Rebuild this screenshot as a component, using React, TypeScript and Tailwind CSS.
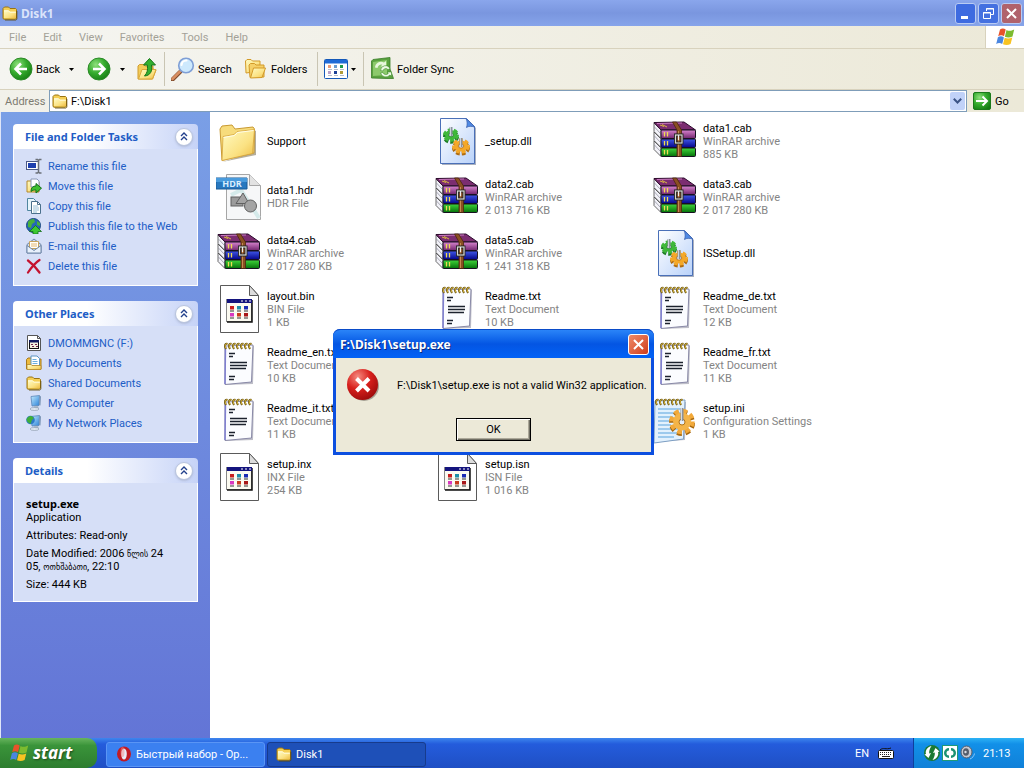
import type { ReactNode } from 'react'

type FileKind = 'folder' | 'dll' | 'cab' | 'hdr' | 'bin' | 'txt' | 'ini'

interface FileEntry {
  name: string
  kind: FileKind
  type?: string
  size?: string
}

// null keeps a slot of the grid empty
const files: (FileEntry | null)[] = [
  { name: 'Support', kind: 'folder' },
  { name: '_setup.dll', kind: 'dll' },
  { name: 'data1.cab', kind: 'cab', type: 'WinRAR archive', size: '885 KB' },
  { name: 'data1.hdr', kind: 'hdr', type: 'HDR File' },
  { name: 'data2.cab', kind: 'cab', type: 'WinRAR archive', size: '2 013 716 KB' },
  { name: 'data3.cab', kind: 'cab', type: 'WinRAR archive', size: '2 017 280 KB' },
  { name: 'data4.cab', kind: 'cab', type: 'WinRAR archive', size: '2 017 280 KB' },
  { name: 'data5.cab', kind: 'cab', type: 'WinRAR archive', size: '1 241 318 KB' },
  { name: 'ISSetup.dll', kind: 'dll' },
  { name: 'layout.bin', kind: 'bin', type: 'BIN File', size: '1 KB' },
  { name: 'Readme.txt', kind: 'txt', type: 'Text Document', size: '10 KB' },
  { name: 'Readme_de.txt', kind: 'txt', type: 'Text Document', size: '12 KB' },
  { name: 'Readme_en.txt', kind: 'txt', type: 'Text Document', size: '10 KB' },
  null,
  { name: 'Readme_fr.txt', kind: 'txt', type: 'Text Document', size: '11 KB' },
  { name: 'Readme_it.txt', kind: 'txt', type: 'Text Document', size: '11 KB' },
  null,
  { name: 'setup.ini', kind: 'ini', type: 'Configuration Settings', size: '1 KB' },
  { name: 'setup.inx', kind: 'bin', type: 'INX File', size: '254 KB' },
  { name: 'setup.isn', kind: 'bin', type: 'ISN File', size: '1 016 KB' },
]

const menus = ['File', 'Edit', 'View', 'Favorites', 'Tools', 'Help']

/* ---------- shared gradients ---------- */

function Gradients() {
  return (
    <svg className="absolute size-0" aria-hidden="true">
      <defs>
        <linearGradient id="folder" x1="0" y1="0" x2="1" y2="1">
          <stop offset="0" stopColor="#fffbc4" />
          <stop offset="0.6" stopColor="#fbe283" />
          <stop offset="1" stopColor="#eebd45" />
        </linearGradient>
        <radialGradient id="green" cx="0.35" cy="0.3" r="0.8">
          <stop offset="0" stopColor="#8fe07c" />
          <stop offset="0.5" stopColor="#35ab2d" />
          <stop offset="1" stopColor="#137a12" />
        </radialGradient>
        <radialGradient id="red" cx="0.35" cy="0.25" r="0.8">
          <stop offset="0" stopColor="#f58b80" />
          <stop offset="0.5" stopColor="#d8201c" />
          <stop offset="1" stopColor="#9c0b0b" />
        </radialGradient>
        <linearGradient id="page" x1="0" y1="0" x2="1" y2="1">
          <stop offset="0" stopColor="#ffffff" />
          <stop offset="1" stopColor="#b9d2fa" />
        </linearGradient>
        <linearGradient id="purpleBook" x1="0" y1="0" x2="0" y2="1">
          <stop offset="0" stopColor="#d884cf" />
          <stop offset="1" stopColor="#70246c" />
        </linearGradient>
        <linearGradient id="blueBook" x1="0" y1="0" x2="0" y2="1">
          <stop offset="0" stopColor="#4058e8" />
          <stop offset="1" stopColor="#05058a" />
        </linearGradient>
        <linearGradient id="greenBook" x1="0" y1="0" x2="0" y2="1">
          <stop offset="0" stopColor="#3fd63a" />
          <stop offset="1" stopColor="#05700a" />
        </linearGradient>
        <linearGradient id="screen" x1="0" y1="0" x2="1" y2="1">
          <stop offset="0" stopColor="#c4ecff" />
          <stop offset="1" stopColor="#2a82d8" />
        </linearGradient>
      </defs>
    </svg>
  )
}

/* ---------- small icons ---------- */

function SmallFolder() {
  return (
    <svg className="size-4 shrink-0" viewBox="0 0 16 16">
      <path d="M1 13.5V3.5L2.5 2h4L8 3.5h5.5l1 1V13l-1 1.2H2z" fill="#f5cf55" stroke="#9a7412" />
      <path d="M2 5.5h4.5L8 6.8h6V13H2z" fill="url(#folder)" />
      <path d="M2 5.8h4.3L8 7.2h5.8" stroke="#fffde0" fill="none" />
      <path d="M14.9 6v8.2l-1 .9H3" stroke="#5d4708" fill="none" strokeOpacity="0.7" />
    </svg>
  )
}

function WindowsFlag({ className }: { className: string }) {
  return (
    <svg className={className} viewBox="0 0 20 20">
      <path d="M5 2.500C7 1 9 1.300 10.700 2.600L9 9.300C7.200 8 5.200 8 3.200 9.300z" fill="#e8532a" />
      <path d="M11.500 3c2.200 1.200 4.500 1.200 7.700-.4l-1.700 6.800c-2.500 1.300-5 1.400-7.600.3z" fill="#7cbb2f" />
      <path d="M2.900 10.300c2-1.400 4.200-1.200 6 .1L7.200 17C5.300 15.700 3.200 15.700 1.200 17z" fill="#4a86e0" />
      <path d="M9.700 10.700c2.500 1.200 4.900 1.100 7.600-.3l-1.700 6.600c-2.600 1.300-5.200 1.300-7.600.2z" fill="#f8c322" />
    </svg>
  )
}

function RoundArrow({ flip }: { flip?: boolean }) {
  return (
    <svg className="size-6" viewBox="0 0 24 24">
      <circle cx="12" cy="12" r="11" fill="url(#green)" stroke="#2c8a28" />
      <path
        d={flip ? 'M6 12h11.500M12 6.500l5.500 5.500-5.500 5.500' : 'M18 12H6.500M12 6.500L6.500 12l5.500 5.500'}
        stroke="#fff"
        strokeWidth="2.500"
        fill="none"
      />
    </svg>
  )
}

function UpFolder() {
  return (
    <svg className="h-6 w-5" viewBox="0 0 20 24">
      <path d="M1 22V9l1.500-1.500h4L8 9h8v3l3 1-3.500 9z" fill="#f3cc5a" stroke="#d09a2b" />
      <path d="M1.500 22L5 12.500h14L15.500 22z" fill="url(#folder)" stroke="#dba93b" />
      <path d="M7.500 19C13.500 18.500 15.500 14 14.500 8H18.500L12.500 1.500 6.500 8h3.800c.7 5 0 8-2.800 11z" fill="#34b02f" stroke="#17741a" />
    </svg>
  )
}

function Magnifier() {
  return (
    <svg className="size-6" viewBox="0 0 24 24">
      <path d="M1.500 22.500L9 15" stroke="#7f4a2b" strokeWidth="4" strokeLinecap="round" />
      <path d="M1.500 22L9 14.500" stroke="#d98f62" strokeWidth="2.500" strokeLinecap="round" />
      <circle cx="15" cy="8.500" r="7.300" fill="#cde9fd" stroke="#7f9fd6" strokeWidth="1.600" />
      <path d="M10.500 8a4.800 4.800 0 0 1 5-4.500" stroke="#fff" strokeWidth="2.200" fill="none" strokeLinecap="round" />
    </svg>
  )
}

function FoldersIcon() {
  return (
    <svg className="size-6" viewBox="0 0 24 24">
      <path d="M2 16L1.500 4 3 2.500h4L8.500 4h7.500v10z" fill="url(#folder)" stroke="#d39a28" />
      <path d="M6 20.500L5 8l1.500-1.500h4L12 8h8v12z" fill="#f5d068" stroke="#d39a28" />
      <path d="M6.500 21l3-10h12l-3.500 9.500z" fill="url(#folder)" stroke="#d39a28" />
    </svg>
  )
}

function ViewsIcon() {
  const dots = ['#e89a78', '#6a9bd0', '#1f9a4a', '#b9a0c8', '#1b3f96', '#b09b38']
  return (
    <svg className="h-5 w-6" viewBox="0 0 24 20">
      <rect x="0.500" y="0.500" width="23" height="19" rx="1" fill="#fff" stroke="#1458b8" />
      <rect x="1" y="1" width="22" height="3.500" fill="#1e6ad6" />
      {dots.map((c, i) => (
        <g key={c}>
          <rect x={4 + (i % 3) * 6} y={i < 3 ? 6 : 12} width="3" height="3" fill={c} />
          <rect x={4 + (i % 3) * 6} y={i < 3 ? 10 : 16} width="4" height="1" fill="#b5bccb" />
        </g>
      ))}
    </svg>
  )
}

function SyncIcon() {
  return (
    <svg className="size-6" viewBox="0 0 24 24">
      <path d="M3 2.500L20 .500V12l3.500 9.500H17L1.500 21V4z" fill="#5aa23f" stroke="#3a7d2a" strokeWidth="0.800" />
      <path d="M3 5L17 3v15L3 19z" fill="#8cc96c" />
      <path d="M5 10.500A6 6 0 0 1 14 5.500l2-1.500v5.500h-5.500l1.800-1.800A3.800 3.800 0 0 0 7.500 11z" fill="#e8f7dd" />
      <path d="M10.500 13.500a5 5 0 0 1 9.500-2l-2 1.200a2.800 2.800 0 0 0-5 1.300zM10.500 16a5.500 5.500 0 0 0 9.500 2l1.500 1.500V15h-4.500l1.300 1.300a3 3 0 0 1-5.300-.8z" fill="#eef9e6" stroke="#3f8d2c" strokeWidth="0.600" />
    </svg>
  )
}

function RenameIcon() {
  return (
    <svg className="size-4" viewBox="0 0 16 16">
      <rect x="0.500" y="3.500" width="12" height="8" fill="#fff" stroke="#4c5a86" />
      <rect x="2" y="5" width="8" height="5" fill="#1d3fae" />
      <path d="M9.500 1.500h2l1 1 1-1h2M12.500 2.500v11M9.500 15h2l1-1 1 1h2" fill="none" stroke="#6b7078" strokeWidth="1.500" />
    </svg>
  )
}

function MoveIcon() {
  return (
    <svg className="size-4" viewBox="0 0 16 16">
      <path d="M1 14V3h5l1 1h6v10z" fill="url(#folder)" stroke="#b4892a" />
      <path d="M5 1h6l2 2v6H5z" fill="#fff" stroke="#8a98b8" />
      <path d="M5 13.500c0-4 2-5.500 5-5.500V5.500l5.500 4.700L10 15v-3c-2 0-3.500.2-5 1.500z" fill="#3fbf2f" stroke="#14701a" />
    </svg>
  )
}

function CopyIcon() {
  return (
    <svg className="size-4" viewBox="0 0 16 16">
      <path d="M1.500.5h6l2 2v10h-8z" fill="#e6f4fb" stroke="#4f86a0" />
      <path d="M5.500 3.500h6l3 3v9h-9z" fill="#fff" stroke="#4b708c" />
      <path d="M7 8h5M7 10h6M7 12h6M7 14h4" stroke="#7fb0cc" strokeWidth="0.800" />
      <path d="M11.500 3.500v3h3" fill="none" stroke="#4b708c" />
    </svg>
  )
}

function WebIcon() {
  return (
    <svg className="size-4" viewBox="0 0 16 16">
      <circle cx="7.500" cy="7.500" r="7" fill="#2467b8" stroke="#1d4a80" />
      <path d="M2 4c2-3 5-3 6-3l1 3-3 2-1 4-3-1z" fill="#49b23a" />
      <path d="M11 3l3 2v3l-3-1z" fill="#49b23a" />
      <path d="M9.500 7.500l6 6h-3.500V16H7v-2.500H3.500z" fill="#3dc82f" stroke="#14701a" strokeWidth="0.800" />
    </svg>
  )
}

function MailIcon() {
  return (
    <svg className="size-4" viewBox="0 0 16 16">
      <path d="M1 6.500l7-5.500 7 5.500V15H1z" fill="#cfdcf0" stroke="#6e86a8" />
      <path d="M3.500 3.500h9v7h-9z" fill="#fff" stroke="#c8a25c" />
      <path d="M5 6h6M5 8h6" stroke="#e6b870" />
      <path d="M1 15V7.500l7 5 7-5V15z" fill="#e8f1fc" stroke="#6e86a8" />
    </svg>
  )
}

function DeleteIcon() {
  return (
    <svg className="size-4" viewBox="0 0 16 16">
      <path d="M2 2.500c4 3 8 7 11.500 12M13.500 2C9 5 5 10 2 14.500" stroke="#c4122f" strokeWidth="2.200" fill="none" strokeLinecap="round" />
    </svg>
  )
}

function DriveIcon() {
  return (
    <svg className="size-4" viewBox="0 0 16 16">
      <path d="M1.500.5h10l3 3v12h-13z" fill="#fff" stroke="#555" />
      <path d="M11.500.5v3h3" fill="none" stroke="#555" />
      <rect x="3.500" y="5.500" width="9" height="8" fill="#f4f0e0" stroke="#111" />
      <rect x="3" y="5" width="10" height="2.500" fill="#111a60" />
      <path d="M5 9h2v1H5zM9 9h2v1H9zM6 11h2v1H6zM10 11h2v1h-2z" fill="#702850" />
    </svg>
  )
}

function DocumentsIcon() {
  return (
    <svg className="size-4" viewBox="0 0 16 16">
      <path d="M.5 14V4.500L2 3h3l1 1h9v10z" fill="#edbb3f" stroke="#a87a1b" />
      <path d="M5 1h6l2.500 2.500V11H5z" fill="#fff" stroke="#5d95c4" />
      <path d="M6.500 4.500h4M6.500 6.500h5M6.500 8.500h5" stroke="#6aaee0" />
      <path d="M1 14.500V9.500h4l1 1h9v4z" fill="url(#folder)" stroke="#b4892a" strokeWidth="0.800" />
    </svg>
  )
}

function ComputerIcon({ globe }: { globe?: boolean }) {
  return (
    <svg className="size-4" viewBox="0 0 16 16">
      <path d="M5 1.500L13.500.5l-.5 10-7 .5z" fill="url(#screen)" stroke="#5a86b8" strokeWidth="0.800" />
      <path d="M13.500.5l1.500 1-.5 9-1.500-.5z" fill="#7d97b8" />
      <path d="M8 11h4l1 2.500-5 1z" fill="#a9b9cc" />
      <ellipse cx="8.500" cy="14" rx="4.500" ry="1.500" fill="#dfe7f0" stroke="#8494a8" strokeWidth="0.600" />
      {globe && (
        <>
          <circle cx="4.500" cy="5" r="4.300" fill="#2d78c8" />
          <path d="M.5 4.500c1-2.500 3-4 5-3.500L8 3 6 5 4.500 9 1.500 7z" fill="#3fae3a" />
        </>
      )}
    </svg>
  )
}

/* ---------- 48px file icons ---------- */

function BigFolder() {
  return (
    <svg className="size-12" viewBox="0 0 48 48">
      <path d="M6 45L40 38V14l-2-1v22z" fill="#6a5c38" opacity="0.500" />
      <path d="M4 12l2-3 10-1 3 4 18-2 1.500 2L38 36 6 43.500z" fill="#f7dc7c" stroke="#c99a32" />
      <path d="M6 43.500L7 19.500l11-2 3-3 17.500-2-2 24z" fill="url(#folder)" stroke="#d6a53d" strokeWidth="0.800" />
      <path d="M7.500 20.500l11-2 3-3 16-2" stroke="#fffde8" fill="none" />
    </svg>
  )
}

interface GearProps {
  x: number
  y: number
  r: number
  fill: string
  stroke: string
}

function Gear({ x, y, r, fill, stroke }: GearProps) {
  return (
    <g>
      <ellipse cx={x} cy={y + 2} rx={r} ry={r * 0.8} fill="none" stroke={stroke} strokeWidth="4" strokeDasharray="3.500 2" />
      <ellipse cx={x} cy={y} rx={r} ry={r * 0.8} fill="none" stroke={fill} strokeWidth="4" strokeDasharray="3.500 2" />
      <ellipse cx={x} cy={y} rx={r} ry={r * 0.8} fill={fill} />
      <ellipse cx={x} cy={y} rx={r * 0.4} ry={r * 0.3} fill="#e8eefa" stroke={stroke} strokeWidth="0.800" />
      <path d={`M${x - 1.5} ${y - 8}h3v9h-3z`} fill="#8a929c" />
      <path d={`M${x - 0.5} ${y - 8}v9`} stroke="#cdd4dc" />
    </g>
  )
}

function DllIcon() {
  return (
    <svg className="size-12" viewBox="0 0 48 48">
      <path d="M8 3h26l8 8v37H8z" fill="#56627e" opacity="0.500" />
      <path d="M6.500 1.500h26l8 8v37h-34z" fill="url(#page)" stroke="#4a70b8" />
      <path d="M32 1.500l8.500 8.500c-3-1-6-1-8 .500 1-3 1-6-.500-9z" fill="#4f8ae6" stroke="#3a62b0" strokeWidth="0.800" />
      <Gear x={17} y={18} r={6} fill="#3fb83a" stroke="#1f7d28" />
      <Gear x={27} y={29} r={7} fill="#f4a828" stroke="#b06c10" />
    </svg>
  )
}

function CabIcon() {
  const books = [
    { y: 13, fill: 'url(#purpleBook)' },
    { y: 22, fill: 'url(#blueBook)' },
    { y: 31, fill: 'url(#greenBook)' },
  ]
  return (
    <svg className="size-12" viewBox="0 0 48 48">
      {books.map((b) => (
        <g key={b.y}>
          <path d={`M2 ${b.y - 7}l7 7v8.500l-7-7z`} fill="#f2f2f8" stroke="#444" strokeWidth="0.800" />
          <path d={`M2.500 ${b.y - 3}l6 6.500`} stroke="#8a8a9a" strokeWidth="0.700" />
        </g>
      ))}
      <path d="M2 5.500l30-.5 11.500 8H9z" fill="#7b2d70" stroke="#2c0a2c" />
      <path d="M5 6.500l25-.500" stroke="#c877be" />
      <path d="M8 8l4 1.500M10 7.500l5 2.500" stroke="#d8b840" />
      {books.map((b) => (
        <g key={b.y}>
          <rect x="9" y={b.y} width="34.500" height="8.500" rx="1" fill={b.fill} stroke="#161020" />
          <path d={`M12.500 ${b.y + 2}v4.500M15.500 ${b.y + 2}v4.500`} stroke="#f0dc50" strokeWidth="1.300" />
        </g>
      ))}
      <path d="M20.500 5h4l5 8v26.500h-4.500V13z" fill="#8a4f22" stroke="#4d270d" strokeWidth="0.800" />
      <path d="M26.500 14v25" stroke="#c48a52" />
      <rect x="23.500" y="18" width="6.500" height="8" fill="none" stroke="#222" strokeWidth="3" />
      <rect x="23.500" y="18" width="6.500" height="8" fill="none" stroke="#d8d8d0" strokeWidth="1.200" />
      <path d="M26.500 18v5" stroke="#eee" strokeWidth="1.200" />
    </svg>
  )
}

function HdrIcon() {
  return (
    <svg className="size-12" viewBox="0 0 48 48">
      <path d="M10.500 1.500h23l11 11v34h-34z" fill="#f6f7f8" stroke="#a6a6a6" />
      <path d="M33.500 1.500v11h11" fill="#e2e2e2" stroke="#a6a6a6" />
      <path d="M15 22l10-5 18 28" stroke="#d5eaea" strokeWidth="4" fill="none" />
      <rect x="15" y="24" width="12" height="9" fill="#9b9b9b" stroke="#606060" />
      <path d="M27 20l6 10.500H20z" fill="#a4a4a4" stroke="#606060" />
      <circle cx="34.500" cy="33" r="6" fill="#a4a4a4" stroke="#606060" />
      <path d="M0 5h31v11H0z" fill="#2878bf" stroke="#1a5a96" />
      <path d="M0 5h31v4H0z" fill="#4a9bdc" />
      <text x="16" y="14" textAnchor="middle" fontSize="9" fontWeight="700" fill="#d8efff" fontFamily="Open Sans, sans-serif">
        HDR
      </text>
    </svg>
  )
}

function BinIcon() {
  const dots = ['#c81e1e', '#1e8ea8', '#1c2cb4', '#d838c0', '#c83c1e', '#a81818']
  return (
    <svg className="size-12" viewBox="0 0 48 48">
      <path d="M4.500.5h29l9 10v37h-38z" fill="#fff" stroke="#5a5a5a" />
      <path d="M33.500.5v10h9z" fill="#dcdcdc" stroke="#5a5a5a" />
      <rect x="10.500" y="14.500" width="25" height="22" fill="#fbfaf0" stroke="#888" />
      <path d="M36 15v22H11" fill="none" stroke="#111" strokeWidth="1.500" />
      <rect x="11" y="14" width="25" height="4" fill="#14147e" />
      <path d="M25 16h2M29 16h2M33 16h2" stroke="#fff" />
      {dots.map((c, i) => (
        <g key={c}>
          <rect x={14 + (i % 3) * 7} y={i < 3 ? 21 : 28} width="4" height="3.500" fill={c} />
          <rect x={14 + (i % 3) * 7} y={i < 3 ? 25.500 : 32.500} width="4" height="1" fill="#333" />
        </g>
      ))}
    </svg>
  )
}

function Rings({ from }: { from: number }) {
  return (
    <>
      {[0, 4, 8, 12, 16, 20, 24].map((dx) => (
        <g key={dx} fill="none">
          <path d={`M${from + dx} 8c-2-3-1-6 1.500-5`} stroke="#6f5a18" strokeWidth="2" />
          <path d={`M${from + dx} 7.500c-1.500-3-.5-5.500 1.500-4.500`} stroke="#d8b53a" />
        </g>
      ))}
    </>
  )
}

function TxtIcon() {
  return (
    <svg className="size-12" viewBox="0 0 48 48">
      <path d="M11 6l27-1-1 38-28 1z" fill="#7e7e92" opacity="0.500" />
      <path d="M9 5l28-1-1.500 37L9 43.500z" fill="#fbfcff" stroke="#8a8aa8" />
      <path d="M9.500 5L9 43" stroke="#7f7fd0" strokeWidth="1.500" />
      <Rings from={10} />
      <path d="M13 12.500h6M13 15.500h4M14 21.500h17M14 24.500h17M14 27.500h16M13 35.500h6M13 38.500h5" stroke="#1c222e" strokeWidth="1.500" />
    </svg>
  )
}

function IniIcon() {
  return (
    <svg className="size-12" viewBox="0 0 48 48">
      <path d="M4 6l30-1-1 38-30 2z" fill="#7e7e92" opacity="0.500" />
      <path d="M3 4l30-1-1.500 39L2 46z" fill="#e2f1fd" stroke="#7d9fc4" />
      <path d="M6 12h22M6 16h22M6 20h15M6 24h12M6 28h13M6 32h20M6 36h22M6 40h16" stroke="#86bde8" strokeWidth="1.300" />
      <Rings from={5} />
      <circle cx="30" cy="26" r="10.500" fill="none" stroke="#a8680e" strokeWidth="5" strokeDasharray="4.700 3.550" />
      <circle cx="30" cy="24.500" r="10.500" fill="none" stroke="#f2a93a" strokeWidth="4.500" strokeDasharray="4.700 3.550" />
      <circle cx="30" cy="24.500" r="9" fill="#f4b448" />
      <circle cx="30" cy="25" r="3" fill="#e4eefa" stroke="#b07418" />
      <path d="M28.500 11h3v13h-3z" fill="#8b929c" />
      <path d="M29.500 11v13" stroke="#d4dae0" />
    </svg>
  )
}

const fileIcons: Record<FileKind, () => ReactNode> = {
  folder: BigFolder,
  dll: DllIcon,
  cab: CabIcon,
  hdr: HdrIcon,
  bin: BinIcon,
  txt: TxtIcon,
  ini: IniIcon,
}

/* ---------- window parts ---------- */

function TitleBar() {
  const button = 'flex size-[21px] items-center justify-center rounded-[3px] border border-[#b9cbf3]'
  return (
    <header className="flex h-[26px] items-center bg-linear-to-b from-[#8aa6ec] via-[#7a96df] to-[#86a4ea] pr-[2px] pl-[2px]">
      <SmallFolder />
      <h1 className="ml-[3px] flex-1 font-['Noto_Sans',sans-serif] text-[12px] font-bold text-[#dbe4fb]">Disk1</h1>
      <div className="flex gap-[2px]">
        <button aria-label="Minimize" className={`${button} bg-[#3e6be0]`}>
          <svg className="size-[15px]" viewBox="0 0 15 15">
            <path d="M3 11.500h7" stroke="#fff" strokeWidth="3" />
          </svg>
        </button>
        <button aria-label="Restore" className={`${button} bg-[#4470e0]`}>
          <svg className="size-[15px]" viewBox="0 0 15 15" fill="none" stroke="#fff">
            <path d="M5.500 5V2.500h7v6H10M5 3h8M2.500 6.500h7v6h-7zM2 7h8" />
          </svg>
        </button>
        <button aria-label="Close" className={`${button} bg-[#b0626c]`}>
          <svg className="size-[15px]" viewBox="0 0 15 15">
            <path d="M3 3l9 9M12 3l-9 9" stroke="#fff" strokeWidth="2" />
          </svg>
        </button>
      </div>
    </header>
  )
}

function DropArrow() {
  return (
    <svg className="h-[3px] w-[5px]" viewBox="0 0 5 3">
      <path d="M0 0h5L2.500 3z" fill="#000" />
    </svg>
  )
}

function Separator() {
  return <div className="h-[34px] w-px bg-[#c9c5b3]" />
}

function Toolbar() {
  return (
    <div className="flex h-[41px] items-center border-b border-[#d8d2bd] bg-linear-to-r from-[#f5f5f1] to-[#ece9d8] pl-[9px]">
      <button className="flex w-[57px] items-center gap-[3px]">
        <RoundArrow />
        Back
      </button>
      <button aria-label="Back history" className="w-[21px] pl-[3px]">
        <DropArrow />
      </button>
      <button aria-label="Forward" className="w-[30px]">
        <RoundArrow flip />
      </button>
      <button aria-label="Forward history" className="w-[20px] pl-[3px]">
        <DropArrow />
      </button>
      <button aria-label="Up" className="w-[27px]">
        <UpFolder />
      </button>
      <Separator />
      <button className="ml-[6px] flex w-[73px] items-center gap-[3px]">
        <Magnifier />
        Search
      </button>
      <button className="flex w-[73px] items-center gap-[3px]">
        <FoldersIcon />
        Folders
      </button>
      <Separator />
      <button aria-label="Views" className="ml-[6px] flex w-[39px] items-center gap-[3px]">
        <ViewsIcon />
        <DropArrow />
      </button>
      <Separator />
      <button className="ml-[6px] flex items-center gap-[3px]">
        <SyncIcon />
        Folder Sync
      </button>
    </div>
  )
}

function AddressBar() {
  return (
    <div className="flex h-[22px] items-center bg-linear-to-r from-[#f2f1ea] to-[#ece9d8] pr-[14px]">
      <label htmlFor="address" className="w-[49px] pl-[5px] text-[#7d7b70]">
        Address
      </label>
      <div className="flex h-[22px] flex-1 items-center border border-[#7f9db9] bg-white pr-px pl-[2px]">
        <SmallFolder />
        <input id="address" defaultValue="F:\Disk1" className="ml-[3px] min-w-0 flex-1 bg-transparent outline-none" />
        <button aria-label="Show addresses" className="flex h-[18px] w-[15px] items-center justify-center rounded-[2px] bg-[#c1d2f8]">
          <svg className="h-[6px] w-[9px]" viewBox="0 0 9 6">
            <path d="M.8 .8l3.700 3.700L8.200 .8" stroke="#3c5486" strokeWidth="2" fill="none" />
          </svg>
        </button>
      </div>
      <button className="ml-[6px] flex w-[37px] items-center gap-[4px]">
        <svg className="size-[18px]" viewBox="0 0 18 18">
          <rect x="0.500" y="0.500" width="17" height="17" rx="1.500" fill="url(#green)" stroke="#1b7a1b" />
          <path d="M3 9h11M9.500 4.500L14 9l-4.500 4.500" stroke="#fff" strokeWidth="2" fill="none" />
        </svg>
        Go
      </button>
    </div>
  )
}

function Panel({ title, children }: { title: string; children: ReactNode }) {
  return (
    <section>
      <div className="flex h-[25px] items-center justify-between rounded-t-[4px] bg-linear-to-r from-white from-40% to-[#c6d3f7] pr-[5px] pl-[12px]">
        <h2 className="font-['Noto_Sans',sans-serif] font-bold text-[#215dc6]">{title}</h2>
        <button aria-label={`Collapse ${title}`} className="flex size-[18px] items-center justify-center rounded-full border border-[#b8c4de] bg-white shadow-sm">
          <svg className="h-[9px] w-[8px]" viewBox="0 0 8 9">
            <path d="M1 4l3-3 3 3M1 8l3-3 3 3" stroke="#22408c" strokeWidth="1.400" fill="none" />
          </svg>
        </button>
      </div>
      <div className="border border-t-0 border-white bg-[#d6dff7]">{children}</div>
    </section>
  )
}

function TaskLink({ icon, label }: { icon: ReactNode; label: string }) {
  return (
    <li className="h-5">
      <a href="#" className="flex h-5 items-center gap-[6px] whitespace-nowrap text-[#215dc6]">
        {icon}
        {label}
      </a>
    </li>
  )
}

function Sidebar() {
  return (
    <aside className="flex w-[210px] shrink-0 flex-col gap-[15px] border-l border-[#dfe6f8] bg-linear-to-b from-[#7a9fe6] to-[#6375d6] px-[12px] pt-[12px]">
      <Panel title="File and Folder Tasks">
        <ul className="pt-[7px] pb-[9px] pl-[12px]">
          <TaskLink icon={<RenameIcon />} label="Rename this file" />
          <TaskLink icon={<MoveIcon />} label="Move this file" />
          <TaskLink icon={<CopyIcon />} label="Copy this file" />
          <TaskLink icon={<WebIcon />} label="Publish this file to the Web" />
          <TaskLink icon={<MailIcon />} label="E-mail this file" />
          <TaskLink icon={<DeleteIcon />} label="Delete this file" />
        </ul>
      </Panel>
      <Panel title="Other Places">
        <ul className="pt-[7px] pb-[9px] pl-[12px]">
          <TaskLink icon={<DriveIcon />} label="DMOMMGNC (F:)" />
          <TaskLink icon={<DocumentsIcon />} label="My Documents" />
          <TaskLink icon={<SmallFolder />} label="Shared Documents" />
          <TaskLink icon={<ComputerIcon />} label="My Computer" />
          <TaskLink icon={<ComputerIcon globe />} label="My Network Places" />
        </ul>
      </Panel>
      <Panel title="Details">
        <div className="flex flex-col gap-[5px] pt-[15px] pr-[10px] pb-[10px] pl-[12px]">
          <p>
            <b className="font-['Noto_Sans',sans-serif] leading-none">setup.exe</b>
            <br />
            Application
          </p>
          <p>Attributes: Read-only</p>
          <p>
            Date Modified: 2006 <span className="text-[8px] leading-none">წლის</span> 24
            <br />
            05, <span className="text-[8px] leading-none">ოთხშაბათი</span>, 22:10
          </p>
          <p>Size: 444 KB</p>
        </div>
      </Panel>
    </aside>
  )
}

function FileTile({ file }: { file: FileEntry }) {
  const Icon = fileIcons[file.kind]
  return (
    <li className="flex h-14 items-center gap-[3px]">
      <Icon />
      <div className="whitespace-nowrap">
        <p>{file.name}</p>
        {file.type && <p className="text-[#848484]">{file.type}</p>}
        {file.size && <p className="text-[#848484]">{file.size}</p>}
      </div>
    </li>
  )
}

function ErrorDialog() {
  return (
    <div
      role="alertdialog"
      aria-labelledby="dialog-title"
      aria-describedby="dialog-text"
      className="absolute top-[329px] left-[333px] w-[321px] rounded-t-[7px] bg-[#0c4fe0] px-[3px] pb-[3px]"
    >
      <div className="-mx-[3px] flex h-[29px] items-center justify-between rounded-t-[7px] border-t border-[#0a4bc8] bg-linear-to-b from-[#2a84f8] via-[#0455e3] to-[#0262f6] pr-[5px] pl-[7px]">
        <h2 id="dialog-title" className="font-['Noto_Sans',sans-serif] text-[12px] font-bold text-white [text-shadow:1px_1px_#0a2a80]">
          F:\Disk1\setup.exe
        </h2>
        <button aria-label="Close" className="flex size-[21px] items-center justify-center rounded-[3px] border border-white bg-linear-to-br from-[#ee8a68] to-[#cf3a16]">
          <svg className="size-[13px]" viewBox="0 0 13 13">
            <path d="M2 2l9 9M11 2l-9 9" stroke="#fff" strokeWidth="2" />
          </svg>
        </button>
      </div>
      <div className="flex flex-col bg-[#ece9d8] pt-[11px] pb-[11px]">
        <div className="flex h-8 items-center gap-[18px] pl-[11px]">
          <svg className="size-8 shrink-0" viewBox="0 0 32 32">
            <circle cx="17" cy="17" r="15" fill="#5f5a50" opacity="0.500" />
            <circle cx="15.500" cy="15.500" r="15.500" fill="url(#red)" />
            <path d="M9.500 9.500l12.500 12.500M22 9.500L9.500 22" stroke="#fff" strokeWidth="4" />
          </svg>
          <p id="dialog-text" className="whitespace-nowrap">
            F:\Disk1\setup.exe is not a valid Win32 application.
          </p>
        </div>
        <button className="mt-[17px] h-[23px] w-[75px] self-center border border-black bg-[#ece9d8] shadow-[inset_1px_1px_#fff,inset_-1px_-1px_#716f64,inset_-2px_-2px_#aca899]">
          OK
        </button>
      </div>
    </div>
  )
}

function Taskbar() {
  return (
    <footer className="flex h-[30px] items-stretch bg-linear-to-b from-[#3f86ee] via-[#245cdc] via-20% to-[#1f4fc4] text-white">
      <button className="flex w-[97px] items-center gap-[4px] rounded-r-[10px] bg-linear-to-b from-[#67b55e] via-[#3a943a] via-25% to-[#2d7d2f] pl-[9px] font-['Noto_Sans',sans-serif] text-[17px] leading-5 font-bold italic [text-shadow:1px_1px_2px_#1c4a1c]">
        <WindowsFlag className="size-5" />
        start
      </button>
      <div className="ml-[9px] flex flex-1 items-center gap-[2px] pt-[2px]">
        <button className="flex h-[25px] w-[159px] items-center gap-[4px] rounded-[3px] border border-[#5a95f5] bg-[#3b80f0] pl-[9px]">
          <svg className="size-4 shrink-0" viewBox="0 0 16 16">
            <ellipse cx="8" cy="8" rx="7" ry="7.500" fill="#c11a24" />
            <ellipse cx="8" cy="8" rx="2.800" ry="5.500" fill="#e8ecf8" />
            <ellipse cx="6.500" cy="6" rx="2" ry="5" fill="#f58a88" opacity="0.500" />
          </svg>
          <span className="truncate">Быстрый набор - Op...</span>
        </button>
        <button className="flex h-[25px] w-[159px] items-center gap-[4px] rounded-[3px] border border-[#173b8c] bg-[#1e50b8] pl-[8px]">
          <SmallFolder />
          Disk1
        </button>
      </div>
      <div className="flex items-center gap-[9px] pr-[19px]">
        <span>EN</span>
        <svg className="h-3 w-4" viewBox="0 0 16 12">
          <path d="M2 3c3-3 6 0 11-2" stroke="#111" fill="none" />
          <rect x="0.500" y="3.500" width="15" height="8" rx="1" fill="#fff" stroke="#111" />
          <path d="M2 5.500h12M2 7.500h12" stroke="#222" strokeDasharray="1 1" />
          <path d="M4 9.500h8" stroke="#222" />
        </svg>
      </div>
      <div className="flex w-[111px] items-center gap-[2px] border-l border-[#0e3f9c] bg-linear-to-b from-[#2cb2f5] via-[#1290e8] via-20% to-[#1080d8] pl-[10px]">
        <svg className="size-4" viewBox="0 0 16 16">
          <circle cx="8" cy="8" r="8" fill="#1c7a34" />
          <path d="M7.500 1C3 2 1 6 2 9L.500 9.500 4.500 13 7 8l-1.800.5C5 6 5.500 4 7.500 1zM8.500 15c4.500-1 6.500-5 5.500-8l1.500-.5L11.500 3 9 8l1.800-.5c.2 2.500-.3 4.500-2.300 7.500z" fill="#fff" />
        </svg>
        <svg className="size-4" viewBox="0 0 16 16">
          <rect x="0.500" y="0.500" width="15" height="15" fill="#fff" stroke="#1f9a78" />
          <path d="M7 3a5 5 0 0 0 0 10v-2.500a2.500 2.500 0 0 1 0-5zM9 3a5 5 0 0 1 0 10v-2.500a2.500 2.500 0 0 0 0-5z" fill="#1c9272" />
        </svg>
        <svg className="size-4" viewBox="0 0 16 16">
          <ellipse cx="6.500" cy="7" rx="5.500" ry="6" fill="#c5c8d0" stroke="#555c6c" />
          <ellipse cx="6" cy="7" rx="3" ry="3.800" fill="#545c6a" />
          <circle cx="5.500" cy="7" r="1.200" fill="#d8dce4" />
          <path d="M10 14c2.500-1 4-3 4.500-5.500" stroke="#8ec8f8" fill="none" />
        </svg>
        <time className="ml-[5px]">21:13</time>
      </div>
    </footer>
  )
}

export default function App() {
  return (
    <div className="relative flex min-h-screen flex-col bg-white font-['Roboto','DejaVu_Sans',sans-serif] text-[11px] leading-[13px] text-black">
      <Gradients />
      <TitleBar />
      <nav className="flex h-[23px] items-stretch border-b border-[#d8d2bd] bg-linear-to-r from-[#f5f5f1] to-[#ece9d8]">
        <div className="flex flex-1 items-center gap-[17px] pl-[9px] text-[#a3a197]">
          {menus.map((menu) => (
            <button key={menu}>{menu}</button>
          ))}
        </div>
        <div className="flex w-[39px] items-center justify-center border-l border-[#d8d2bd] bg-white">
          <WindowsFlag className="size-5" />
        </div>
      </nav>
      <Toolbar />
      <AddressBar />
      <div className="flex flex-1">
        <Sidebar />
        <main className="flex-1 bg-white pt-px pl-[6px]">
          <ul className="grid grid-cols-[repeat(auto-fill,218px)]">
            {files.map((file, i) => (file ? <FileTile key={file.name} file={file} /> : <li key={i} />))}
          </ul>
        </main>
      </div>
      <Taskbar />
      <ErrorDialog />
    </div>
  )
}
